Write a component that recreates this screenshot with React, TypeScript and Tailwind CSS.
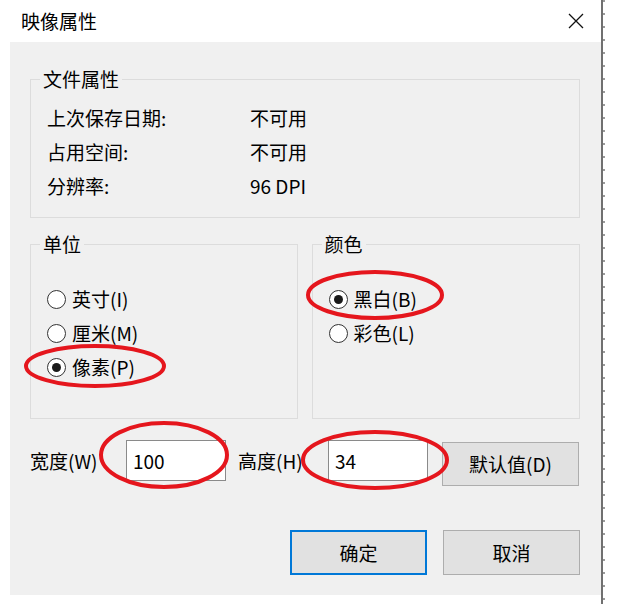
import React from "react";

const font = { fontFamily: '"Noto Sans CJK SC", "Noto Sans", sans-serif' };

function Radio({ checked, label }: { checked?: boolean; label: string }) {
  return (
    <div className="flex items-center h-[34px]">
      <div className="w-[19px] h-[19px] rounded-full border-[1.5px] border-[#333333] bg-white flex items-center justify-center">
        {checked && <div className="w-[9px] h-[9px] rounded-full bg-[#1a1a1a]" />}
      </div>
      <span className="ml-[6px] leading-[22px]">{label}</span>
    </div>
  );
}

function Legend({ text }: { text: string }) {
  return (
    <span className="absolute left-[9px] top-[-12px] px-[3px] bg-[#f0f0f0] leading-[22px]">{text}</span>
  );
}

export default function App() {
  return (
    <div className="w-[622px] h-[604px] bg-white flex relative text-[19px] text-black" style={font}>
      <div className="w-[601px] h-full flex flex-col">
        <div className="h-[42px] flex items-center justify-between pl-[21px] pr-[17px]">
          <span className="leading-[22px]">映像属性</span>
          <svg width="16" height="16" viewBox="0 0 16 16">
            <path d="M1 1 L15 15 M15 1 L1 15" stroke="#111" strokeWidth="1.3" fill="none" />
          </svg>
        </div>
        <div className="ml-[10px] h-[553px] bg-[#f0f0f0] pl-[20px] pr-[21px] pt-[37px] flex flex-col">
          <div className="h-[139px] border border-[#dcdcdc] relative pt-[21px] pl-[16px]">
            <Legend text="文件属性" />
            <div className="flex items-center h-[34px]">
              <span className="w-[203px] leading-[22px]">上次保存日期:</span>
              <span className="leading-[22px]">不可用</span>
            </div>
            <div className="flex items-center h-[34px]">
              <span className="w-[203px] leading-[22px]">占用空间:</span>
              <span className="leading-[22px]">不可用</span>
            </div>
            <div className="flex items-center h-[34px]">
              <span className="w-[203px] leading-[22px]">分辨率:</span>
              <span className="leading-[22px]">96 DPI</span>
            </div>
          </div>
          <div className="mt-[26px] flex gap-[14px] h-[175px]">
            <div className="w-[268px] h-full border border-[#dcdcdc] relative pt-[37px] pl-[16px]">
              <Legend text="单位" />
              <Radio label="英寸(I)" />
              <Radio label="厘米(M)" />
              <Radio label="像素(P)" checked />
            </div>
            <div className="w-[269px] h-full border border-[#dcdcdc] relative pt-[37px] pl-[16px]">
              <Legend text="颜色" />
              <Radio label="黑白(B)" checked />
              <Radio label="彩色(L)" />
            </div>
          </div>
          <div className="mt-[21px] flex items-start h-[46px]">
            <div className="w-[96px] h-[41px] flex items-center leading-[22px]">宽度(W)</div>
            <div className="w-[100px] h-[41px] border border-[#8a8a8a] bg-white pl-[6px] flex items-center leading-[22px]">100</div>
            <div className="ml-[12px] w-[90px] h-[41px] flex items-center leading-[22px]">高度(H)</div>
            <div className="w-[100px] h-[41px] border border-[#8a8a8a] bg-white pl-[6px] flex items-center leading-[22px]">34</div>
            <div className="ml-[14px] mt-[2px] w-[137px] h-[44px] border border-[#adadad] bg-[#e1e1e1] flex items-center justify-center leading-[22px]">默认值(D)</div>
          </div>
          <div className="mt-[44px] flex justify-end gap-[16px]">
            <div className="w-[137px] h-[45px] border-2 border-[#0078d7] bg-[#e1e1e1] flex items-center justify-center leading-[22px]">确定</div>
            <div className="w-[137px] h-[45px] border border-[#adadad] bg-[#e1e1e1] flex items-center justify-center leading-[22px]">取消</div>
          </div>
        </div>
      </div>
      <div className="w-[2px] h-full bg-[#707070]" />
      <div className="w-[2px] h-full bg-[repeating-linear-gradient(to_bottom,#9a9a9a_0px,#9a9a9a_2px,transparent_2px,transparent_13px)]" />
      <svg className="absolute left-0 top-0 pointer-events-none" width="622" height="604" viewBox="0 0 622 604">
        <g fill="none" stroke="#e5161d" strokeWidth="4">
          <ellipse cx="95" cy="366" rx="69" ry="20" />
          <ellipse cx="375" cy="295" rx="67" ry="23" />
          <ellipse cx="164" cy="455" rx="63" ry="32" />
          <ellipse cx="375" cy="460" rx="72" ry="28" />
        </g>
      </svg>
    </div>
  );
}
